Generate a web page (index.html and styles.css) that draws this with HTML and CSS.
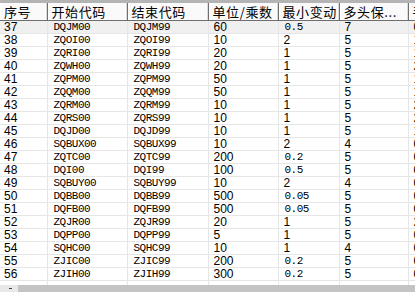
FILE: index.html
```html
<!DOCTYPE html>
<html>
<head>
<meta charset="utf-8">
<link rel="stylesheet" href="styles.css">
</head>
<body>
<div class="grid">
  <table class="tbl">
    <colgroup>
      <col class="c1"><col class="c2"><col class="c3"><col class="c4"><col class="c5"><col class="c6"><col class="c7">
    </colgroup>
    <thead>
      <tr><th>序号</th><th>开始代码</th><th>结束代码</th><th>单位/乘数</th><th>最小变动</th><th>多头保...</th><th>手</th></tr>
    </thead>
    <tbody>
      <tr class="sel"><td>37</td><td class="m">DQJM00</td><td class="m">DQJM99</td><td>60</td><td class="m">0.5</td><td>7</td><td>0</td></tr>
      <tr><td>38</td><td class="m">ZQOI00</td><td class="m">ZQOI99</td><td>10</td><td>2</td><td>5</td><td>1</td></tr>
      <tr><td>39</td><td class="m">ZQRI00</td><td class="m">ZQRI99</td><td>20</td><td>1</td><td>5</td><td>1</td></tr>
      <tr><td>40</td><td class="m">ZQWH00</td><td class="m">ZQWH99</td><td>20</td><td>1</td><td>5</td><td>2</td></tr>
      <tr><td>41</td><td class="m">ZQPM00</td><td class="m">ZQPM99</td><td>50</td><td>1</td><td>5</td><td>1</td></tr>
      <tr><td>42</td><td class="m">ZQQM00</td><td class="m">ZQQM99</td><td>50</td><td>1</td><td>5</td><td>1</td></tr>
      <tr><td>43</td><td class="m">ZQRM00</td><td class="m">ZQRM99</td><td>10</td><td>1</td><td>5</td><td>2</td></tr>
      <tr><td>44</td><td class="m">ZQRS00</td><td class="m">ZQRS99</td><td>10</td><td>1</td><td>5</td><td>2</td></tr>
      <tr><td>45</td><td class="m">DQJD00</td><td class="m">DQJD99</td><td>10</td><td>1</td><td>5</td><td>1</td></tr>
      <tr><td>46</td><td class="m">SQBUX00</td><td class="m">SQBUX99</td><td>10</td><td>2</td><td>4</td><td>0</td></tr>
      <tr><td>47</td><td class="m">ZQTC00</td><td class="m">ZQTC99</td><td>200</td><td class="m">0.2</td><td>5</td><td>0</td></tr>
      <tr><td>48</td><td class="m">DQI00</td><td class="m">DQI99</td><td>100</td><td class="m">0.5</td><td>5</td><td>0</td></tr>
      <tr><td>49</td><td class="m">SQBUY00</td><td class="m">SQBUY99</td><td>10</td><td>2</td><td>4</td><td>0</td></tr>
      <tr><td>50</td><td class="m">DQBB00</td><td class="m">DQBB99</td><td>500</td><td class="m">0.05</td><td>5</td><td>0</td></tr>
      <tr><td>51</td><td class="m">DQFB00</td><td class="m">DQFB99</td><td>500</td><td class="m">0.05</td><td>5</td><td>0</td></tr>
      <tr><td>52</td><td class="m">ZQJR00</td><td class="m">ZQJR99</td><td>20</td><td>1</td><td>5</td><td>2</td></tr>
      <tr><td>53</td><td class="m">DQPP00</td><td class="m">DQPP99</td><td>5</td><td>1</td><td>5</td><td>0</td></tr>
      <tr><td>54</td><td class="m">SQHC00</td><td class="m">SQHC99</td><td>10</td><td>1</td><td>4</td><td>0</td></tr>
      <tr><td>55</td><td class="m">ZJIC00</td><td class="m">ZJIC99</td><td>200</td><td class="m">0.2</td><td>5</td><td>0</td></tr>
      <tr><td>56</td><td class="m">ZJIH00</td><td class="m">ZJIH99</td><td>300</td><td class="m">0.2</td><td>5</td><td>0</td></tr>
      <tr class="tail"><td></td><td></td><td></td><td></td><td></td><td></td><td></td></tr>
    </tbody>
  </table>
  <div class="hscroll">
    <div class="arrow"><span class="tri"></span></div>
    <div class="track"></div>
  </div>
</div>
</body>
</html>
```

FILE: styles.css
```css
html, body {
  margin: 0;
  padding: 0;
  width: 415px;
  height: 292px;
  overflow: hidden;
  background: #ffffff;
}
.grid {
  width: 415px;
  height: 292px;
  overflow: hidden;
  display: flex;
  flex-direction: column;
  border-top: 3px solid #b4b4b4;
  box-sizing: border-box;
}
.tbl {
  border-collapse: collapse;
  table-layout: fixed;
  width: 460px;
  font-family: "Liberation Sans", Arial, sans-serif;
  font-size: 12px;
  color: #000;
  flex: none;
}
.c1 { width: 47px; }
.c2 { width: 80px; }
.c3 { width: 81px; }
.c4 { width: 70px; }
.c5 { width: 61px; }
.c6 { width: 69px; }
.c7 { width: 52px; }
.tbl th {
  height: 17px;
  padding: 0 0 0 4px;
  text-align: left;
  font-weight: normal;
  font-family: "Noto Sans CJK SC", "Liberation Sans", sans-serif;
  font-size: 13px;
  letter-spacing: 0.6px;
  line-height: 17px;
  background: #fafafa;
  border-right: 1px solid #6e6e6e;
  border-bottom: 1px solid #6e6e6e;
  box-shadow: inset -1px 0 0 #dcdcdc, inset 1px 0 0 #ffffff;
  white-space: nowrap;
}
.tbl td {
  height: 12px;
  padding: 0 0 0 5px;
  line-height: 12px;
  border-right: 1px solid #e6e6e6;
  border-bottom: 1px solid #e6e6e6;
  white-space: nowrap;
  overflow: hidden;
}
.tbl td:first-child { padding-left: 4px; }
.tbl td.m {
  font-family: "Liberation Mono", "Courier New", monospace;
  font-size: 11px;
  letter-spacing: -0.5px;
  padding-left: 6px;
}
.tbl tr.sel td { background: #f0f0f0; }
.tbl tr.tail td {
  height: 4px;
  line-height: 4px;
  border-bottom: none;
}
.hscroll {
  flex: 1;
  display: flex;
  background: #c4c4c4;
}
.arrow {
  width: 18px;
  background: #e8e8e8;
  position: relative;
}
.tri {
  position: absolute;
  left: 9px;
  top: 3px;
  width: 3px;
  height: 1px;
  background: #404040;
}
.track {
  flex: 1;
  background: #c4c4c4;
}
```
